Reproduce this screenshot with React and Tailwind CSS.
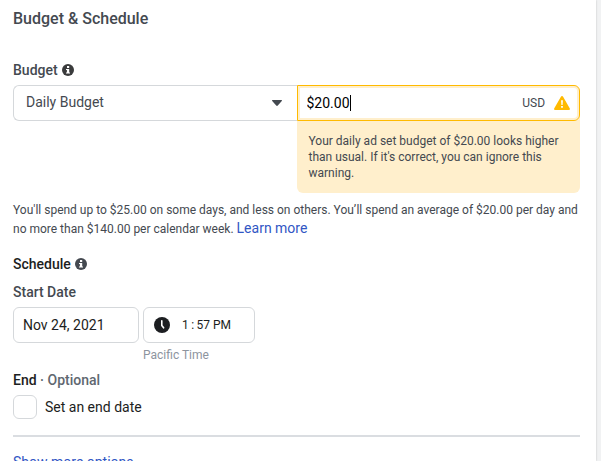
import React, { useState } from 'react';

const InfoIcon = ({ className }) => (
    <svg viewBox="0 0 12 12" className={`size-3 ${className}`} aria-hidden="true">
        <circle cx="6" cy="6" r="6" fill="currentColor" />
        <path d="M5 2h2.2v1.9H5zM4 4.9h3.2v3.5H8v1.2H4V8.4h.9V6.1H4z" fill="#fff" />
    </svg>
);

const ClockIcon = () => (
    <svg viewBox="0 0 16 16" className="size-4 shrink-0 text-[#1c1e21]" aria-hidden="true">
        <circle cx="8" cy="8" r="8" fill="currentColor" />
        <path d="M7.8 3.8v4.6l1.8 2.4" fill="none" stroke="#fff" strokeWidth="1.6" strokeLinecap="round" strokeLinejoin="round" />
    </svg>
);

const WarningIcon = () => (
    <svg viewBox="0 0 16 14" className="h-3.5 w-4 shrink-0" aria-hidden="true">
        <path d="M6.9.7a1.3 1.3 0 0 1 2.2 0l6.6 11.6c.5.8 0 1.7-.9 1.7H1.2c-.9 0-1.4-.9-.9-1.7z" fill="#ffba00" />
        <path d="M7.1 4.2h1.8l-.3 4.7H7.4zM7.1 10h1.8v1.8H7.1z" fill="#fff" />
    </svg>
);

const App = () => {
    const [budgetType, setBudgetType] = useState('daily');
    const [amount, setAmount] = useState('$20.00');
    const [date, setDate] = useState('Nov 24, 2021');
    const [time, setTime] = useState('1\u2009:\u200957 PM');
    const [hasEnd, setHasEnd] = useState(false);

    return (
        <div className="h-screen overflow-hidden bg-[#f1f2f3] pr-[5px] font-[Roboto,sans-serif] text-sm text-[#1c1e21]">
            <main className="h-full overflow-hidden bg-white pt-[9px] pr-4 pl-[13px] shadow-[0_0_2px_rgba(0,0,0,0.2)]">
                <h1 className="text-base leading-5 font-medium text-[#444950]">Budget &amp; Schedule</h1>

                {/* Budget */}
                <div className="mt-[31px] flex items-center gap-1 leading-5 font-medium text-[#444950]">
                    <label htmlFor="budget-type">Budget</label>
                    <InfoIcon className="text-[#3a3b3c]" />
                </div>
                <div className="mt-[5px] flex items-start">
                    <div className="relative flex-1">
                        <select
                            id="budget-type"
                            value={budgetType}
                            onChange={(e) => setBudgetType(e.target.value)}
                            className="h-9 w-full appearance-none rounded-l-md border border-r-0 border-[#d5d8db] bg-white px-3 pb-0.5 text-[#444950] outline-none"
                        >
                            <option value="daily">Daily Budget</option>
                            <option value="lifetime">Lifetime Budget</option>
                        </select>
                        <svg viewBox="0 0 10 6" className="pointer-events-none absolute top-[15px] right-[15px] h-1.5 w-2.5" aria-hidden="true">
                            <path d="M.6 0h8.8c.6 0 .8.6.4 1L5.8 5.5c-.4.5-1.2.5-1.6 0L.2 1C-.2.6 0 0 .6 0z" fill="#444950" />
                        </svg>
                    </div>
                    <div className="flex-1 rounded-r-md rounded-bl-md bg-[#ffefcc]">
                        <div className="flex h-9 items-center rounded-r-md border border-[#ffba00] bg-white pr-[9px] pl-[9px] inset-ring-2 inset-ring-[#ffefcc]">
                            <input
                                type="text"
                                aria-label="Budget amount"
                                value={amount}
                                onChange={(e) => setAmount(e.target.value)}
                                className="field-sizing-content bg-transparent text-black outline-none"
                            />
                            <span className="h-4 w-px bg-black" />
                            <span className="mr-[9px] ml-auto text-xs text-[#444950]">USD</span>
                            <WarningIcon />
                        </div>
                        <p className="px-3 pt-3 pb-3 text-xs leading-4 text-[#444950]">
                            Your daily ad set budget of $20.00 looks higher than usual. If it's correct, you can ignore this warning.
                        </p>
                    </div>
                </div>
                <p className="mt-2 text-xs leading-[19px] text-[#444950]">
                    You'll spend up to $25.00 on some days, and less on others. You’ll spend an average of $20.00 per day and no more than $140.00 per calendar week.{' '}
                    <a href="#learn-more" className="text-sm leading-4 text-[#3156c4]">Learn more</a>
                </p>

                {/* Schedule */}
                <div className="mt-[15px] flex items-center gap-1 leading-5 font-medium">
                    <h2>Schedule</h2>
                    <InfoIcon className="text-[#444950]" />
                </div>
                <label htmlFor="start-date" className="mt-2 block leading-5 font-medium text-[#444950]">Start Date</label>
                <div className="mt-[5px] flex items-start gap-1">
                    <input
                        id="start-date"
                        type="text"
                        value={date}
                        onChange={(e) => setDate(e.target.value)}
                        className="h-9 w-[126px] rounded-md border border-[#d5d8db] px-[9px] outline-none"
                    />
                    <div>
                        <div className="flex h-9 w-28 items-center gap-3 rounded-md border border-[#d5d8db] px-2.5">
                            <ClockIcon />
                            <input
                                type="text"
                                aria-label="Start time"
                                value={time}
                                onChange={(e) => setTime(e.target.value)}
                                className="w-full min-w-0 text-xs text-[#1c1e21] outline-none"
                            />
                        </div>
                        <p className="mt-1 text-xs leading-4 text-[#8d949e]">Pacific Time</p>
                    </div>
                </div>

                <p className="mt-[7px] leading-5 font-medium text-[#1c1e21]">
                    End <span className="text-[#606770]">· Optional</span>
                </p>
                <label className="mt-[5px] flex items-center gap-2 leading-5 text-[#1c1e21]">
                    <input
                        type="checkbox"
                        checked={hasEnd}
                        onChange={(e) => setHasEnd(e.target.checked)}
                        className="size-6 appearance-none rounded-md border border-[#d5d8db] bg-white checked:bg-[#1877f2]"
                    />
                    Set an end date
                </label>

                <hr className="mt-4 border-t-2 border-[#dadde1]" />
                <a href="#more-options" className="mt-[15px] block leading-5 text-[#3156c4]">Show more options</a>
            </main>
        </div>
    );
};

export default App;
